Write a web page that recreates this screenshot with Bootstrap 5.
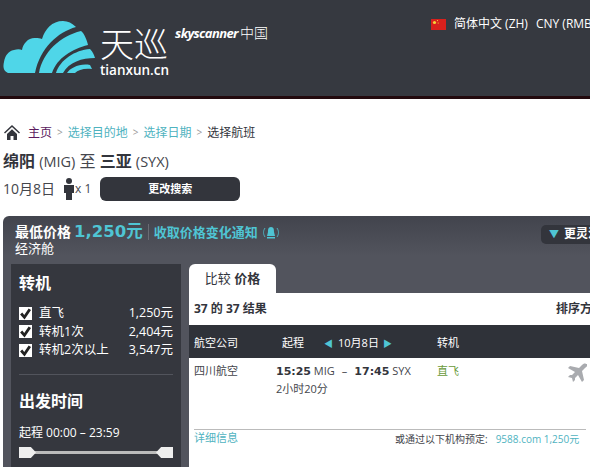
<!DOCTYPE html>
<html lang="zh">
<head>
<meta charset="utf-8">
<title>天巡</title>
<link rel="stylesheet" href="https://cdn.jsdelivr.net/npm/bootstrap@5.3.0/dist/css/bootstrap.min.css">
<style>
html,body{width:590px;height:467px;overflow:hidden;background:#fff}
body{font-family:"Open Sans","Noto Sans CJK SC",sans-serif;font-size:12px;color:#33353c;line-height:1.3}
.site-head{height:99px;background:#363940;border-bottom:3px solid #230a0e;color:#fff}
.logo-wrap{width:431px;flex:none}
.logo-mark{margin-top:15px;flex:none}
.logo-text{padding-top:25px}
.logo-cn{font-family:"Noto Sans CJK SC",sans-serif;font-weight:300;font-size:34px;line-height:36px;height:36px;white-space:nowrap}
.logo-url{font-size:13.5px;font-weight:600;line-height:18px;white-space:nowrap}
.logo-sky{font-size:13px;font-weight:700;font-style:italic;letter-spacing:-.6px;line-height:16px}
.logo-china{font-size:14px;font-weight:300;margin-left:2px}
.logo-side{margin:0 0 0 6px;padding-top:24px;white-space:nowrap}
.head-links{padding-top:16px;font-size:12px;white-space:nowrap;line-height:16px}
.head-cur{margin-left:8px}
.flag-cn{flex:none;margin-right:8px}
.crumbs{padding:25px 0 0 4px;font-size:12px;line-height:17px;box-sizing:content-box;height:17px}
.crumbs a{color:#4fb3bf;text-decoration:none}
.crumbs a.home-link{color:#5b1a5e;margin-left:8px}
.crumbs i{font-style:normal;color:#999;font-size:10px;margin:0 5px}
.route-title{font-size:16px;font-weight:400;margin:9px 0 0 3px;line-height:22px;color:#44464c}
.route-title b{color:#33353c;font-weight:700}
.route-title span{font-size:14.5px}
.date-row{margin:4px 0 0 3px;height:24px;font-size:14px;color:#44464c}
.date-row small{font-size:12px}
.change-btn{width:140px;height:24px;background:#33353c;border:0;border-radius:6px;color:#fff;font-size:11px;font-weight:700;margin-left:9px;padding:0}
.result-panel{margin:15px 0 0 3px;width:640px;height:260px;background:linear-gradient(#42444d,#52545d 40px);border-radius:6px 6px 0 0;color:#fff}
.panel-top{height:48px;padding:6px 0 0 12px;position:relative}
.low-label{font-weight:700;font-size:14px}
.low-price{font-family:"DejaVu Sans","Noto Sans CJK SC",sans-serif;font-weight:700;font-size:16.5px;color:#4fc5d4;margin-left:3px;line-height:20px}
.low-alert{color:#4fc5d4;font-weight:700;font-size:13px;border-left:1px solid #6a6c74;margin-left:5px;padding-left:5px;line-height:16px}
.low-line{height:20px}
.cabin{font-size:13px;line-height:13px}
.more-pill{position:absolute;left:538px;top:9px;width:90px;height:19px;background:#33353c;border-radius:5px;font-weight:700;font-size:12px;line-height:18px;padding-left:8px;white-space:nowrap}
.more-pill span{color:#4fc5d4;margin-right:5px;font-size:10px}
.panel-body{padding-left:8px;gap:8px}
.side-col{width:170px;height:203px;background:#35373e;padding:0 8px}
.side-head{font-size:16px;font-weight:700;margin:0;line-height:22px}
.side-head-top{margin-top:8px}
.stop-list{margin-top:10px}
.stop-row{font-size:12.5px;height:18.5px;line-height:18px}
.tick-box{width:13px;height:13px;background:#fff;margin-right:7px;flex:none}
.side-rule{border-top:1px solid #52545c;margin:14.5px 0 15px}
.range-label{font-size:12px;line-height:16px;margin-top:13px}
.range-track{height:14px;margin-top:6px;position:relative}
.range-track::before{content:"";position:absolute;left:10px;right:10px;top:4px;height:3px;background:#bbb}
.grip{position:absolute;top:0;width:17px;height:11px;background:#eee}
.grip-l{left:0;clip-path:polygon(0 0,70% 0,100% 50%,70% 100%,0 100%)}
.grip-r{right:0;clip-path:polygon(30% 0,100% 0,100% 100%,30% 100%,0 50%)}
.main-col{width:430px}
.cmp-tab{width:87px;height:29px;background:#fff;border-radius:6px 6px 0 0;color:#33353c;font-size:13px;text-align:center;line-height:29px}
.count-row{height:32px;background:#fff;color:#33353c;font-size:12px;font-weight:700;line-height:32px;padding-left:5px;position:relative}
.count-row span{position:absolute;left:367px;top:0;white-space:nowrap}
.col-heads{height:33px;background:#2f3239;font-size:11px;line-height:35px;position:relative;white-space:nowrap}
.col-heads>span{position:absolute;top:0}
.col-a{left:5px}.col-b{left:93px}.col-c{left:135px}.col-d{left:248px}
.arrow-c{color:#4fc5d4;font-size:9px}
.date-txt{margin:0 4px 0 5px}
.flight-box{height:109px;background:#fff;color:#44464c;position:relative;font-size:11px}
.flight-cell{position:absolute;white-space:nowrap}
.cell-air{left:5px;top:6px}
.cell-time{left:87px;top:6px}
.cell-dur{left:87px;top:24px}
.cell-stop{left:248px;top:6px;color:#6a9a3a}
.cell-plane{left:378px;top:5px}
.cell-info{left:5px;top:73px}
.cell-book{left:206px;top:75px;font-size:10px}
.time-b{font-family:"DejaVu Sans",sans-serif;font-weight:700;font-size:11px;color:#33353c}
.dash-gap{margin:0 7px}
.flight-rule{position:absolute;left:5px;top:71px;width:392px;border-top:1px solid #bbb}
.teal{color:#4fb3bf}
.book-price{margin-left:8px}
</style>
</head>
<body>
<header class="site-head d-flex">
  <div class="logo-wrap d-flex">
    <svg class="logo-mark" width="100" height="65" viewBox="0 15 100 65" aria-hidden="true">
      <g fill="#4fd6e8">
        <path d="M8 73C3 71 3 66 4 62 5 56 8 51 14 50c3-1 6-1 8 0 1-7 7-13 14-12 2 0 4 0 6 1 3-10 10-18 21-18 5 0 9 2 13 6C58 32 40 48 35 73z"/>
        <path d="M39 73C43 52 60 36 81 31c3 2 6 9 7 14C72 49 57 58 52 73z"/>
        <path d="M56 73C60 60 75 50 90 49c3 3 4 6 5 9-13 0-26 4-32 15z"/>
        <path d="M67 73c3-5 13-10 23-8l2 4c-8-1-14 1-17 4z"/>
      </g>
    </svg>
    <div class="logo-text">
      <div class="logo-cn">天巡</div>
      <div class="logo-url">tianxun.cn</div>
    </div>
    <div class="logo-side"><span class="logo-sky">skyscanner</span><span class="logo-china">中国</span></div>
  </div>
  <div class="head-links d-flex align-items-center align-self-start">
    <svg class="flag-cn" width="15" height="11" viewBox="0 0 15 11" aria-hidden="true"><rect width="15" height="11" fill="#d8201c"/><circle cx="3.5" cy="3.5" r="1.6" fill="#f5d33a"/><circle cx="6.5" cy="1.6" r=".6" fill="#f5d33a"/><circle cx="7.2" cy="4" r=".6" fill="#f5d33a"/></svg>
    <span>简体中文 (ZH)</span><span class="head-cur">CNY (RMB)</span>
  </div>
</header>
<nav class="crumbs d-flex align-items-center">
  <svg width="16" height="15" viewBox="0 0 16 15" aria-hidden="true"><path d="M8 0 0 7.500l1 1L8 2l7 6.500 1-1zM3 9v6h3.500v-4h3v4H13V9L8 4.300z" fill="#33353c"/></svg>
  <a class="home-link" href="#">主页</a><i>&gt;</i><a href="#">选择目的地</a><i>&gt;</i><a href="#">选择日期</a><i>&gt;</i><span>选择航班</span>
</nav>
<h1 class="route-title"><b>绵阳</b> <span>(MIG)</span> 至 <b>三亚</b> <span>(SYX)</span></h1>
<div class="date-row d-flex align-items-center">
  <span>10月8日</span>
  <svg class="ms-2" width="12" height="22" viewBox="0 0 12 22" aria-hidden="true"><circle cx="6" cy="3" r="3" fill="#33353c"/><path d="M1 7h10v8H9v7H3v-7H1z" fill="#33353c"/></svg>
  <small>x 1</small>
  <button class="change-btn" type="button">更改搜索</button>
</div>
<section class="result-panel">
  <div class="panel-top">
    <div class="low-line d-flex align-items-center"><span class="low-label">最低价格</span><span class="low-price">1,250元</span><span class="low-alert">收取价格变化通知</span>
      <svg class="ms-1" width="18" height="13" viewBox="0 0 18 13" aria-hidden="true"><path d="M9 1c3 0 3 3 3 5l1 4H5l1-4c0-2 0-5 3-5zM5 11h8v1.500H5z" fill="#4fc5d4"/><path d="M3 2C1 5 1 8 3 11M15 2c2 3 2 6 0 9" fill="none" stroke="#4fc5d4" stroke-width=".8"/></svg>
    </div>
    <div class="cabin">经济舱</div>
    <div class="more-pill"><span>▼</span>更灵活的选择</div>
  </div>
  <div class="panel-body d-flex">
    <aside class="side-col">
      <h2 class="side-head side-head-top">转机</h2>
      <div class="stop-list">
        <div class="stop-row d-flex align-items-center"><svg class="tick-box" viewBox="0 0 12 12"><path d="M2 6l3 3.500L10 2" fill="none" stroke="#222" stroke-width="2.600"/></svg><span class="flex-grow-1">直飞</span><span>1,250元</span></div>
        <div class="stop-row d-flex align-items-center"><svg class="tick-box" viewBox="0 0 12 12"><path d="M2 6l3 3.500L10 2" fill="none" stroke="#222" stroke-width="2.600"/></svg><span class="flex-grow-1">转机1次</span><span>2,404元</span></div>
        <div class="stop-row d-flex align-items-center"><svg class="tick-box" viewBox="0 0 12 12"><path d="M2 6l3 3.500L10 2" fill="none" stroke="#222" stroke-width="2.600"/></svg><span class="flex-grow-1">转机2次以上</span><span>3,547元</span></div>
      </div>
      <div class="side-rule"></div>
      <h2 class="side-head">出发时间</h2>
      <div class="range-label">起程 00:00 – 23:59</div>
      <div class="range-track"><span class="grip grip-l"></span><span class="grip grip-r"></span></div>
    </aside>
    <div class="main-col">
      <div class="cmp-tab">比较 <b>价格</b></div>
      <div class="count-row">37 的 37 结果<span>排序方式</span></div>
      <div class="col-heads">
        <span class="col-a">航空公司</span>
        <span class="col-b">起程</span>
        <span class="col-c"><b class="arrow-c">◀</b><b class="date-txt fw-normal">10月8日</b><b class="arrow-c">▶</b></span>
        <span class="col-d">转机</span>
      </div>
      <div class="flight-box">
        <span class="flight-cell cell-air">四川航空</span>
        <span class="flight-cell cell-time"><span class="time-b">15:25</span> MIG<span class="dash-gap">–</span><span class="time-b">17:45</span> SYX</span>
        <span class="flight-cell cell-dur">2小时20分</span>
        <span class="flight-cell cell-stop">直飞</span>
        <svg class="flight-cell cell-plane" width="20" height="20" viewBox="0 0 20 20" aria-hidden="true"><path d="M19 1c-1-1-3 0-4 1l-3 3L3 3 1 5l7 4-3 3H3l-2 2 4 1 1 4 2-2v-2l3-3 4 7 2-2-2-9 3-3c1-1 4-3 3-4z" fill="#a9abaf"/></svg>
        <div class="flight-rule"></div>
        <span class="flight-cell teal cell-info">详细信息</span>
        <span class="flight-cell cell-book">或通过以下机构预定:<span class="teal book-price">9588.com 1,250元</span></span>
      </div>
    </div>
  </div>
</section>
<script src="https://cdn.jsdelivr.net/npm/bootstrap@5.3.0/dist/js/bootstrap.bundle.min.js"></script>
</body>
</html>
